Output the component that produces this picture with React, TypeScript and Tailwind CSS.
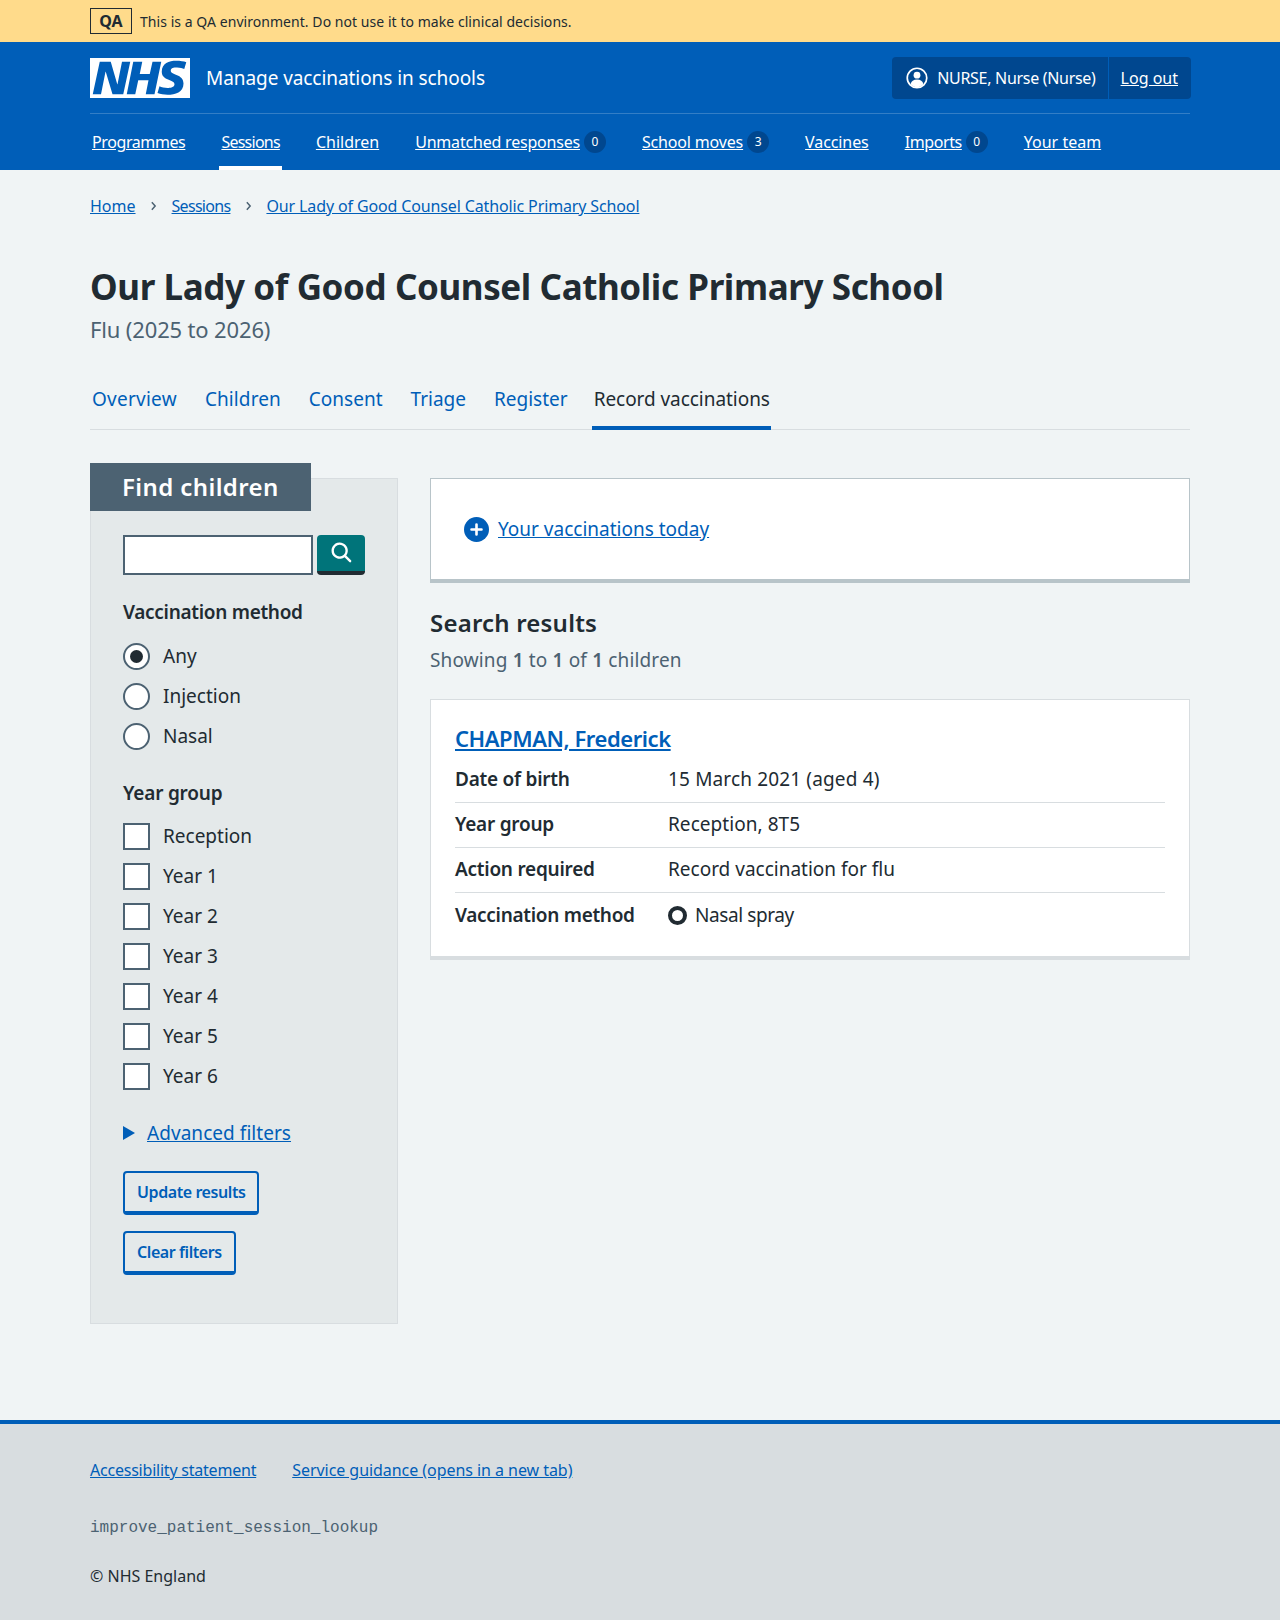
const navItems = [
  { label: "Programmes", tracking: "tracking-[-0.4px]" },
  { label: "Sessions", active: true, tracking: "tracking-[-0.75px]" },
  { label: "Children", tracking: "" },
  { label: "Unmatched responses", count: 0, tracking: "tracking-[-0.2px]" },
  { label: "School moves", count: 3, tracking: "tracking-[-0.17px]" },
  { label: "Vaccines", tracking: "tracking-[-0.1px]" },
  { label: "Imports", count: 0, tracking: "tracking-[-0.4px]" },
  { label: "Your team", tracking: "" },
];

const tabs = [
  { label: "Overview", tracking: "tracking-[0.25px]" },
  { label: "Children", tracking: "tracking-[0.1px]" },
  { label: "Consent", tracking: "" },
  { label: "Triage", tracking: "" },
  { label: "Register", tracking: "" },
];
const years = ["Reception", "Year 1", "Year 2", "Year 3", "Year 4", "Year 5", "Year 6"];

const rows = [
  { key: "Date of birth", value: "15 March 2021 (aged 4)", tracking: "tracking-[0.15px]" },
  { key: "Year group", value: "Reception, 8T5", tracking: "tracking-[0.05px]" },
  { key: "Action required", value: "Record vaccination for flu", tracking: "" },
];

function NhsLogo() {
  return (
    <svg viewBox="0 0 40 16" className="h-[40px] w-[100px] shrink-0" preserveAspectRatio="none">
      <path fill="#fff" d="M0 0h40v16H0z" />
      <path
        fill="#005eb8"
        d="M3.9 1.5h4.4l2.6 9h.1l1.8-9h3.3l-2.8 13H9l-2.7-9h-.1l-1.8 9H1.1M17.3 1.5h3.6l-1 4.9h4L25 1.5h3.5l-2.7 13h-3.5l1.1-5.6h-4.1l-1.2 5.6h-3.4M37.7 4.4c-.7-.3-1.6-.6-2.9-.6-1.4 0-2.5.2-2.5 1.3 0 1.8 5.1 1.2 5.1 5.1 0 3.6-3.3 4.5-6.4 4.5-1.3 0-2.9-.3-4-.7l.8-2.7c.7.4 2.1.7 3.2.7s2.8-.2 2.8-1.5c0-2.1-5.1-1.3-5.1-5 0-3.4 2.9-4.4 5.8-4.4 1.6 0 3.1.2 4 .6"
      />
    </svg>
  );
}

function UserIcon() {
  return (
    <svg viewBox="0 0 22 22" className="h-[22px] w-[22px]">
      <circle cx="11" cy="11" r="9.75" fill="none" stroke="#fff" strokeWidth="1.7" />
      <circle cx="11" cy="8.2" r="3.4" fill="#fff" />
      <path fill="#fff" d="M4.6 17.2c.7-3 3-4.6 6.4-4.6s5.7 1.6 6.4 4.6c-1.7 2-3.9 3-6.4 3s-4.7-1-6.4-3z" />
    </svg>
  );
}

function Chevron() {
  return (
    <svg viewBox="0 0 8 12" className="mx-[14.5px] h-[10px] w-[7px]">
      <path d="M2 1.5 6 6l-4 4.5" fill="none" stroke="#4c6272" strokeWidth="1.8" />
    </svg>
  );
}

function Badge({ count }: { count: number }) {
  return (
    <span className="ml-[4px] flex h-[22px] w-[22px] items-center justify-center rounded-full bg-[#00478f] text-[12px] text-white">
      {count}
    </span>
  );
}

function Radio({ label, checked }: { label: string; checked?: boolean }) {
  return (
    <div className="flex h-[40px] items-center gap-[13px]">
      <span className="flex h-[27px] w-[27px] items-center justify-center rounded-full border-2 border-[#4c6272] bg-white">
        {checked && <span className="h-[13px] w-[13px] rounded-full bg-[#212b32]" />}
      </span>
      <span className="text-[19px]">{label}</span>
    </div>
  );
}

function Checkbox({ label }: { label: string }) {
  return (
    <div className="flex h-[40px] items-center gap-[13px]">
      <span className="h-[27px] w-[27px] border-2 border-[#4c6272] bg-white" />
      <span className="text-[19px]">{label}</span>
    </div>
  );
}

function SecondaryButton({ children }: { children: string }) {
  return (
    <button className="block h-[44px] rounded-[4px] border-2 border-b-[4px] border-[#005eb8] px-[12px] text-[16px] font-semibold tracking-[-0.42px] text-[#005eb8]">
      {children}
    </button>
  );
}

export default function App() {
  return (
    <div className="flex min-h-[1620px] flex-col bg-[#f0f4f5] font-['Noto_Sans',sans-serif] text-[#212b32]">
      {/* QA banner */}
      <div className="h-[42px] bg-[#ffdb8b]">
        <div className="mx-auto flex h-full w-[1100px] items-center">
          <span className="flex h-[26px] w-[42px] items-center justify-center border border-[#212b32] text-[16px] font-bold">
            QA
          </span>
          <span className="ml-[8px] text-[14px] tracking-[0.05px]">
            This is a QA environment. Do not use it to make clinical decisions.
          </span>
        </div>
      </div>

      {/* Header */}
      <header className="h-[128px] bg-[#005eb8] text-white">
        <div className="mx-auto w-[1100px]">
          <div className="flex h-[72px] items-center justify-between border-b border-[#337ec6] pt-px">
            <div className="flex items-center gap-[16px]">
              <NhsLogo />
              <span className="text-[19px] tracking-[-0.07px]">Manage vaccinations in schools</span>
            </div>
            <div className="-mr-px flex h-[42px] items-center rounded-[4px] bg-[#00478f] text-[16px]">
              <div className="flex h-full items-center gap-[9px] border-r border-[#005eb8] pl-[14px] pr-[12px]">
                <UserIcon />
                <span className="tracking-[-0.3px]">NURSE, Nurse (Nurse)</span>
              </div>
              <a className="pl-[12px] pr-[13px] underline">Log out</a>
            </div>
          </div>
          <nav className="flex h-[56px] gap-[36px] pl-[2px] text-[16px]">
            {navItems.map((item) => (
              <div
                key={item.label}
                className={`flex items-center ${item.active ? "-mx-[2px] border-b-4 border-white px-[2px] pt-[4px]" : ""}`}
              >
                <a className={`underline ${item.tracking}`}>{item.label}</a>
                {item.count !== undefined && <Badge count={item.count} />}
              </div>
            ))}
          </nav>
        </div>
      </header>

      <main className="mx-auto w-[1100px] flex-1">
        {/* Breadcrumbs */}
        <div className="flex h-[72px] items-center text-[16px] text-[#005eb8]">
          <a className="underline">Home</a>
          <Chevron />
          <a className="tracking-[-0.7px] underline">Sessions</a>
          <Chevron />
          <a className="tracking-[-0.13px] underline">Our Lady of Good Counsel Catholic Primary School</a>
        </div>

        <h1 className="mt-[20px] text-[35px] font-bold leading-[50px] tracking-[-0.4px]">
          Our Lady of Good Counsel Catholic Primary School
        </h1>
        <p className="mt-[1px] text-[22px] leading-[32px] tracking-[-0.15px] text-[#4c6272]">Flu (2025 to 2026)</p>

        {/* Tabs */}
        <div className="mt-[23px] flex h-[62px] gap-[28px] border-b border-[#d8dde0] pl-[2px] text-[19px]">
          {tabs.map((tab) => (
            <a key={tab.label} className={`flex h-[61px] items-center pt-[2px] text-[#005eb8] ${tab.tracking}`}>
              {tab.label}
            </a>
          ))}
          <span className="-ml-[4px] flex h-[62px] items-center border-b-4 border-[#005eb8] pl-[2px] pr-[1px] pt-[4px] tracking-[-0.05px]">
            Record vaccinations
          </span>
        </div>

        <div className="mt-[32px] flex gap-[32px]">
          {/* Filters */}
          <aside className="w-[308px]">
            <div className="mt-[16px] h-[846px] border border-[#d8dde0] bg-[#e4e9ea]">
              <div className="-ml-px -mt-[16px] flex h-[48px] w-[221px] items-center bg-[#4c6272] pl-[32px] text-[24px] font-semibold tracking-[0.4px] text-white">
                Find children
              </div>
              <div className="px-[32px] pt-[24px]">
                <div className="flex gap-[4px]">
                  <div className="h-[40px] w-[191px] border-2 border-[#4c6272] bg-white" />
                  <button className="flex h-[40px] w-[48px] items-center justify-center rounded-[4px] border-b-[4px] border-[#212b32] bg-[#00747a] pl-[2px]">
                    <svg viewBox="0 0 24 24" className="h-[28px] w-[28px]">
                      <path
                        fill="#fff"
                        d="M19.71 18.29l-4.11-4.1a7 7 0 1 0-1.41 1.41l4.1 4.11a1 1 0 0 0 1.42 0 1 1 0 0 0 0-1.42zM5 10a5 5 0 1 1 5 5 5 5 0 0 1-5-5z"
                      />
                    </svg>
                  </button>
                </div>

                <div className="mt-[23px] text-[19px] font-semibold leading-[28px] tracking-[-0.3px]">
                  Vaccination method
                </div>
                <div className="mt-[10px]">
                  <Radio label="Any" checked />
                  <Radio label="Injection" />
                  <Radio label="Nasal" />
                </div>

                <div className="mt-[23px] text-[19px] font-semibold leading-[28px] tracking-[-0.2px]">Year group</div>
                <div className="mt-[9px]">
                  {years.map((year) => (
                    <Checkbox key={year} label={year} />
                  ))}
                </div>

                <div className="mt-[23px] flex h-[28px] items-center gap-[12px] text-[19px] text-[#005eb8]">
                  <span className="h-0 w-0 border-y-[7px] border-l-[12px] border-y-transparent border-l-[#005eb8]" />
                  <a className="tracking-[0.05px] underline">Advanced filters</a>
                </div>

                <div className="mt-[24px] space-y-[16px]">
                  <SecondaryButton>Update results</SecondaryButton>
                  <SecondaryButton>Clear filters</SecondaryButton>
                </div>
              </div>
            </div>
          </aside>

          {/* Results */}
          <section className="mt-[16px] w-[760px]">
            <div className="flex h-[105px] items-center gap-[9px] border border-b-4 border-[#b8c4c9] bg-white pl-[33px]">
              <svg viewBox="0 0 25 25" className="h-[25px] w-[25px]">
                <circle cx="12.5" cy="12.5" r="12.5" fill="#005eb8" />
                <path d="M12.5 7.5v10M7.5 12.5h10" stroke="#fff" strokeWidth="2.6" strokeLinecap="round" />
              </svg>
              <a className="text-[19px] text-[#005eb8] underline">Your vaccinations today</a>
            </div>

            <h2 className="mt-[24px] text-[24px] font-semibold leading-[32px] tracking-[0.2px]">Search results</h2>
            <p className="mt-[7px] text-[19px] leading-[28px] tracking-[0.15px] text-[#4c6272]">
              Showing <b className="font-semibold">1</b> to <b className="font-semibold">1</b> of{" "}
              <b className="font-semibold">1</b> children
            </p>

            <div className="mt-[25px] h-[261px] border border-b-4 border-[#d8dde0] bg-white px-[24px] pt-[23px]">
              <a className="mb-[5px] block text-[22px] font-semibold leading-[30px] tracking-[-0.45px] text-[#005eb8] underline">
                CHAPMAN, Frederick
              </a>
              <dl className="text-[19px]">
                {rows.map((row) => (
                  <div key={row.key} className="flex h-[45px] items-center border-b border-[#d8dde0] pb-px">
                    <dt className="w-[213px] font-semibold tracking-[-0.25px]">{row.key}</dt>
                    <dd className={row.tracking}>{row.value}</dd>
                  </div>
                ))}
                <div className="flex h-[45px] items-center">
                  <dt className="w-[213px] font-semibold tracking-[-0.3px]">Vaccination method</dt>
                  <dd className="flex items-center gap-[8px] tracking-[-0.4px]">
                    <span className="h-[19px] w-[19px] rounded-full border-[4px] border-[#212b32]" />
                    Nasal spray
                  </dd>
                </div>
              </dl>
            </div>
          </section>
        </div>
      </main>

      {/* Footer */}
      <footer className="h-[200px] border-t-4 border-[#005eb8] bg-[#d8dde0]">
        <div className="mx-auto w-[1100px] pt-[34px]">
          <div className="flex gap-[36px] text-[16px] leading-[24px] text-[#005eb8]">
            <a className="tracking-[-0.22px] underline">Accessibility statement</a>
            <a className="tracking-[-0.05px] underline">Service guidance (opens in a new tab)</a>
          </div>
          <div className="mt-[34px] font-['Liberation_Mono',monospace] text-[16px] leading-[24px] text-[#4c6272]">
            improve_patient_session_lookup
          </div>
          <div className="mt-[24px] text-[16px] leading-[24px]">© NHS England</div>
        </div>
      </footer>
    </div>
  );
}
